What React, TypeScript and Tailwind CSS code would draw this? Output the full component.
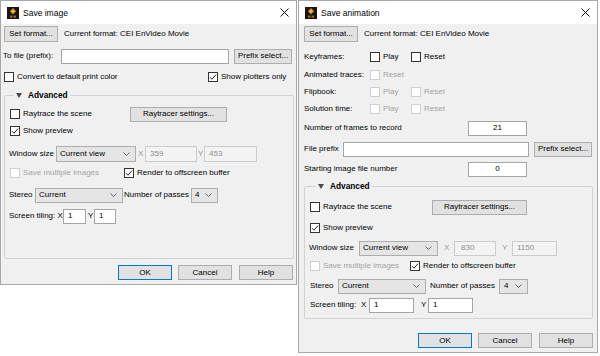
import clsx from 'clsx'
import type { ReactNode } from 'react'

/* ─────────────── 작은 위젯들 ─────────────── */

function AppIcon() {
  return (
    <svg width="12" height="12" viewBox="0 0 12 12" className="shrink-0">
      <rect width="12" height="12" fill="#1c140a" />
      <path d="M6 1 L9.2 4.2 L6 7.4 L2.8 4.2 Z" fill="#c08a2c" />
      <circle cx="6" cy="4.2" r="1.3" fill="#f1c04e" />
      <rect x="3" y="8.6" width="2.4" height="2" fill="#9a7434" />
      <rect x="6.6" y="8.6" width="2.4" height="2" fill="#9a7434" />
    </svg>
  )
}

function CloseX() {
  return (
    <svg width="9" height="9" viewBox="0 0 9 9" className="shrink-0">
      <path d="M0.5 0.5 L8.5 8.5 M8.5 0.5 L0.5 8.5" stroke="#111" strokeWidth="1" fill="none" />
    </svg>
  )
}

function Chevron() {
  return (
    <svg width="7" height="4" viewBox="0 0 7 4" className="shrink-0">
      <path d="M0.5 0.5 L3.5 3.5 L6.5 0.5" stroke="#555" strokeWidth="0.9" fill="none" />
    </svg>
  )
}

function Triangle() {
  return (
    <svg width="6" height="5" viewBox="0 0 6 5" className="shrink-0">
      <polygon points="0,0 6,0 3,5" fill="#4a4a4a" />
    </svg>
  )
}

function Check({
  label,
  checked = false,
  disabled = false,
  className,
}: {
  label: string
  checked?: boolean
  disabled?: boolean
  className?: string
}) {
  return (
    <div className={clsx('flex items-center whitespace-nowrap shrink-0', disabled ? 'text-[#a3a3a3]' : 'text-black', className)}>
      <span
        className={clsx(
          'w-[10px] h-[10px] border bg-white flex items-center justify-center shrink-0',
          disabled ? 'border-[#cfcfcf]' : 'border-[#333333]',
        )}
      >
        {checked && (
          <svg width="8" height="8" viewBox="0 0 8 8">
            <path d="M1 4.2 L3 6.2 L7 1.6" fill="none" stroke="#222" strokeWidth="1" />
          </svg>
        )}
      </span>
      <span className="ml-[3px]">{label}</span>
    </div>
  )
}

function Btn({ children, className, primary }: { children: ReactNode; className?: string; primary?: boolean }) {
  return (
    <div
      className={clsx(
        'h-[15px] flex items-center justify-center border bg-[#e1e1e1] whitespace-nowrap shrink-0',
        primary ? 'border-[#0078d7]' : 'border-[#adadad]',
        className,
      )}
    >
      {children}
    </div>
  )
}

function Field({
  value = '',
  className,
  disabled,
  center,
}: {
  value?: string
  className?: string
  disabled?: boolean
  center?: boolean
}) {
  return (
    <div
      className={clsx(
        'h-[15px] border flex items-center px-[4px] shrink-0',
        disabled ? 'bg-[#f3f3f3] border-[#cccccc] text-[#8c8c8c]' : 'bg-white border-[#a5a5a5] text-black',
        center && 'justify-center',
        className,
      )}
    >
      {value}
    </div>
  )
}

function Select({ value, className }: { value: string; className?: string }) {
  return (
    <div className={clsx('h-[15px] border border-[#adadad] bg-[#e5e5e5] flex items-center pl-[3px] pr-[5px] shrink-0', className)}>
      <span className="flex-1 whitespace-nowrap">{value}</span>
      <Chevron />
    </div>
  )
}

function Row({ children, className }: { children: ReactNode; className?: string }) {
  return <div className={clsx('h-[16px] flex items-center whitespace-nowrap shrink-0', className)}>{children}</div>
}

function Group({ children, className, legendClass }: { children: ReactNode; className?: string; legendClass?: string }) {
  return (
    <div className={clsx('relative border border-[#d2d2d2] rounded-[2px] flex flex-col shrink-0', className)}>
      <div
        className={clsx(
          'absolute top-[-6px] h-[10px] flex items-center gap-[6px] px-[2px] bg-[#f0f0f0] font-bold text-[8.3px]',
          legendClass,
        )}
      >
        <Triangle />
        <span>Advanced</span>
      </div>
      {children}
    </div>
  )
}

function Dialog({ title, className, children }: { title: string; className?: string; children: ReactNode }) {
  return (
    <div className={clsx('flex flex-col border border-[#a8a8a8] bg-[#f0f0f0] shrink-0 overflow-hidden', className)}>
      <div className="h-[23px] bg-white flex items-center pl-[6px] pr-[7px] shrink-0">
        <AppIcon />
        <span className="ml-[4px] text-[8.5px]">{title}</span>
        <span className="ml-auto">
          <CloseX />
        </span>
      </div>
      {children}
    </div>
  )
}

function ButtonRow({ className }: { className?: string }) {
  return (
    <div className={clsx('h-[15px] flex items-center justify-end shrink-0', className)}>
      <Btn primary className="w-[54px]">OK</Btn>
      <Btn className="w-[54px] ml-[6px]">Cancel</Btn>
      <Btn className="w-[54px] ml-[7px]">Help</Btn>
    </div>
  )
}

/* ─────────────── Save image ─────────────── */

function SaveImage() {
  return (
    <Dialog title="Save image" className="w-[297px] h-[285px]">
      <div className="flex flex-col pl-[3px] pr-[2px]">
        <Row className="mt-[2px]">
          <Btn className="w-[54px] h-[16px]">Set format...</Btn>
          <span className="ml-[6px]">Current format: CEI EnVideo Movie</span>
        </Row>
        <Row className="mt-[6px]">
          <span className="w-[58px] -ml-[1px]">To file (prefix):</span>
          <Field className="w-[168px]" />
          <Btn className="w-[58px] ml-[5px]">Prefix select...</Btn>
        </Row>
        <Row className="mt-[5px]">
          <Check label="Convert to default print color" className="w-[204px]" />
          <Check label="Show plotters only" checked />
        </Row>

        <Group className="mt-[10px] h-[164px]" legendClass="left-[9px]">
          <div className="flex flex-col pl-[5px]">
            <Row className="mt-[10px]">
              <Check label="Raytrace the scene" className="w-[120px]" />
              <Btn className="w-[97px]">Raytracer settings...</Btn>
            </Row>
            <Row className="mt-[1px]">
              <Check label="Show preview" checked />
            </Row>
            <Row className="mt-[7px]">
              <span className="w-[47px] -ml-[1px]">Window size</span>
              <Select value="Current view" className="w-[80px] h-[16px]" />
              <span className="w-[9px] pl-[2px] text-[#9a9a9a]">X</span>
              <Field value="359" disabled className="w-[52px] h-[16px]" />
              <span className="w-[7px] pl-[1px] text-[#9a9a9a]">Y</span>
              <Field value="453" disabled className="w-[53px] h-[16px]" />
            </Row>
            <Row className="mt-[3px]">
              <Check label="Save multiple images" disabled className="w-[114px]" />
              <Check label="Render to offscreen buffer" checked />
            </Row>
            <Row className="mt-[6px]">
              <span className="w-[26px] -ml-[1px]">Stereo</span>
              <Select value="Current" className="w-[88px]" />
              <span className="w-[68px] pl-[1px]">Number of passes</span>
              <Select value="4" className="w-[27px] pr-[3px]" />
            </Row>
            <Row className="mt-[5px]">
              <span className="w-[54px] -ml-[1px]">Screen tiling: X</span>
              <Field value="1" className="w-[23px] px-[2px]" />
              <span className="w-[8px] pl-[2px]">Y</span>
              <Field value="1" className="w-[22px] px-[2px]" />
            </Row>
          </div>
        </Group>

        <ButtonRow className="mt-[6px] pr-[1px]" />
      </div>
    </Dialog>
  )
}

/* ─────────────── Save animation ─────────────── */

function SaveAnimation() {
  return (
    <Dialog title="Save animation" className="w-[300px] h-[353px] ml-[1px]">
      <div className="flex flex-col pl-[5px] pr-[4px]">
        <Row className="mt-[2px]">
          <Btn className="w-[54px] h-[16px]">Set format...</Btn>
          <span className="ml-[6px]">Current format: CEI EnVideo Movie</span>
        </Row>
        <Row className="mt-[7px]">
          <span className="w-[66px]">Keyframes:</span>
          <Check label="Play" className="w-[41px]" />
          <Check label="Reset" />
        </Row>
        <Row className="mt-[2px]">
          <span className="w-[66px]">Animated traces:</span>
          <Check label="Reset" disabled />
        </Row>
        <Row className="mt-[1px]">
          <span className="w-[66px]">Flipbook:</span>
          <Check label="Play" disabled className="w-[41px]" />
          <Check label="Reset" disabled />
        </Row>
        <Row className="mt-[1px]">
          <span className="w-[66px]">Solution time:</span>
          <Check label="Play" disabled className="w-[41px]" />
          <Check label="Reset" disabled />
        </Row>
        <Row className="mt-[3px]">
          <span className="w-[164px]">Number of frames to record</span>
          <Field value="21" center className="w-[59px] h-[14px]" />
        </Row>
        <Row className="mt-[5px]">
          <span className="w-[39px]">File prefix</span>
          <Field className="w-[186px]" />
          <Btn className="w-[58px] ml-[5px]">Prefix select...</Btn>
        </Row>
        <Row className="mt-[4px]">
          <span className="w-[164px]">Starting image file number</span>
          <Field value="0" center className="w-[59px] h-[14px]" />
        </Row>

        <Group className="mt-[9px] h-[133px]" legendClass="left-[11px]">
          <div className="flex flex-col pl-[5px]">
            <Row className="mt-[12px]">
              <Check label="Raytrace the scene" className="w-[122px]" />
              <Btn className="w-[95px]">Raytracer settings...</Btn>
            </Row>
            <Row className="mt-[5px]">
              <Check label="Show preview" checked />
            </Row>
            <Row className="mt-[4px]">
              <span className="w-[50px] -ml-[1px]">Window size</span>
              <Select value="Current view" className="w-[79px]" />
              <span className="w-[16px] pl-[6px] text-[#9a9a9a]">X</span>
              <Field value="830" disabled className="w-[42px] px-[6px]" />
              <span className="w-[16px] pl-[6px] text-[#9a9a9a]">Y</span>
              <Field value="1150" disabled className="w-[45px]" />
            </Row>
            <Row className="mt-[2px]">
              <Check label="Save multiple images" disabled className="w-[100px]" />
              <Check label="Render to offscreen buffer" checked />
            </Row>
            <Row className="mt-[4px]">
              <span className="w-[28px]">Stereo</span>
              <Select value="Current" className="w-[88px]" />
              <span className="w-[73px] pl-[4px]">Number of passes</span>
              <Select value="4" className="w-[29px] pl-[4px] pr-[4px]" />
            </Row>
            <Row className="mt-[3px]">
              <span className="w-[48px]">Screen tiling:</span>
              <span className="w-[11px] pl-[3px]">X</span>
              <Field value="1" className="w-[45px] px-[2px]" />
              <span className="w-[14px] pl-[7px]">Y</span>
              <Field value="1" className="w-[45px] px-[2px]" />
            </Row>
          </div>
        </Group>

        <ButtonRow className="mt-[14px]" />
      </div>
    </Dialog>
  )
}

export default function App() {
  return (
    <div className="w-[600px] h-[356px] bg-white flex items-start overflow-hidden text-[8px] leading-[10px] text-black font-['Liberation_Sans',Arial,sans-serif]">
      <SaveImage />
      <SaveAnimation />
    </div>
  )
}
